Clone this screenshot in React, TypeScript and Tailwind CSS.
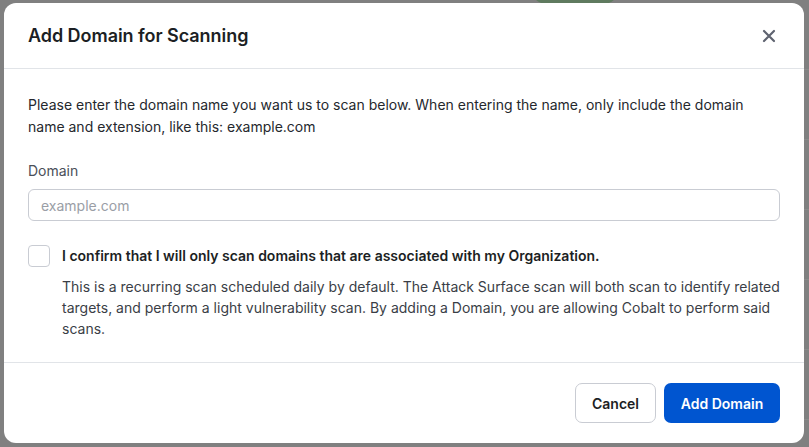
import React, { useState } from "react";

// Dialog for adding a domain to the scan list
const App: React.FC = () => {
  const [domain, setDomain] = useState<string>("");
  const [confirmed, setConfirmed] = useState<boolean>(false);

  return (
    <div
      className="relative h-[447px] w-full overflow-hidden bg-[#808080] pl-[4px] pr-[5px] pt-[3px] pb-[4px]"
      style={{ fontFamily: "Inter, 'Noto Sans', sans-serif" }}
    >
      {/* Hint of the page behind the overlay */}
      <div className="absolute left-[530px] top-[-30px] h-[34px] w-[90px] rounded-full bg-[#5f7a5f]" />
      <div className="absolute right-0 top-0 flex h-full w-[5px] flex-col">
        {[0, 1, 2, 3, 4, 5].map((i) => (
          <div key={i} className="h-[70px] border-b border-[#8a8a8a]" />
        ))}
      </div>

      {/* Modal */}
      <div className="relative flex h-full flex-col rounded-[12px] bg-white">
        {/* Header */}
        <div className="flex h-[66px] items-center justify-between border-b border-[#e1e4e8] pl-6 pr-[25px]">
          <h2 className="text-[18px] font-semibold tracking-[-0.05px] text-[#1c1f24]">
            Add Domain for Scanning
          </h2>
          <button className="flex h-5 w-5 items-center justify-center text-[#5f6370]">
            <svg width="14" height="14" viewBox="0 0 14 14" fill="none">
              <path d="M2 2L12 12M12 2L2 12" stroke="currentColor" strokeWidth="2.2" strokeLinecap="round" />
            </svg>
          </button>
        </div>

        {/* Body */}
        <div className="flex flex-1 flex-col border-b border-[#e1e4e8] px-6 pt-[25px]">
          <p className="text-[14px] leading-[22px] text-[#25282d]">
            Please enter the domain name you want us to scan below. When entering the name, only include the domain
            name and extension, like this: example.com
          </p>

          <label className="mt-[22px] text-[14px] leading-[22px] text-[#4a4f59]">Domain</label>
          <input
            value={domain}
            onChange={(e) => setDomain(e.target.value)}
            placeholder="example.com"
            className="mt-[7px] h-[32px] w-full rounded-[6px] border border-[#c9ccd3] px-3 text-[14px] text-[#25282d] outline-none placeholder:text-[#9a9ea6]"
          />

          <div className="mt-[24px] flex items-start gap-3">
            <button
              onClick={() => setConfirmed(!confirmed)}
              className={`h-[22px] w-[22px] shrink-0 rounded-[4px] border ${
                confirmed ? "border-[#0052cc] bg-[#0052cc]" : "border-[#c9ccd3] bg-white"
              }`}
            />
            <div className="flex flex-col">
              <span className="text-[14px] font-semibold leading-[22px] text-[#1c1f24]">
                I confirm that I will only scan domains that are associated with my Organization.
              </span>
              <p className="mt-[9px] text-[14px] leading-[21px] text-[#3a3e46]">
                This is a recurring scan scheduled daily by default. The Attack Surface scan will both scan to identify related
                targets, and perform a light vulnerability scan. By adding a Domain, you are allowing Cobalt to perform said
                scans.
              </p>
            </div>
          </div>
        </div>

        {/* Footer */}
        <div className="flex h-[80px] items-center justify-end gap-[8px] px-6">
          <button className="h-[40px] w-[81px] rounded-[7px] border border-[#c9ccd3] bg-white text-[14px] font-semibold text-[#1c1f24]">
            Cancel
          </button>
          <button className="h-[40px] w-[116px] rounded-[7px] bg-[#0055d0] text-[14px] font-semibold text-white">
            Add Domain
          </button>
        </div>
      </div>
    </div>
  );
};

export default App;
